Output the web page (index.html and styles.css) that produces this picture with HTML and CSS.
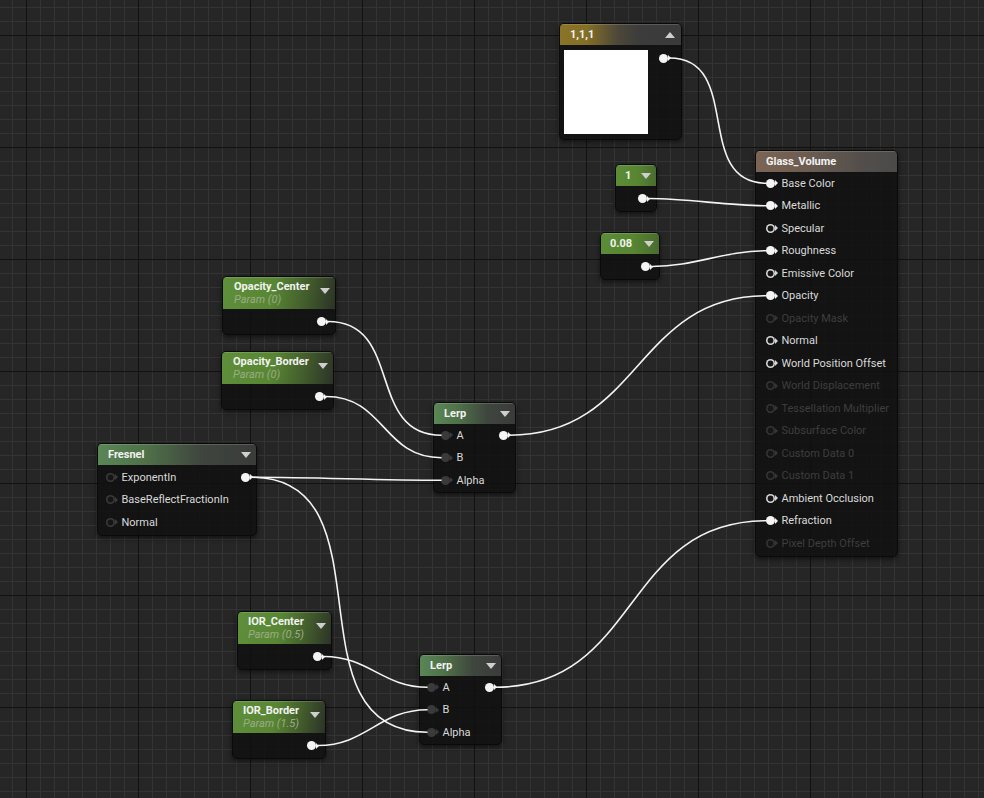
FILE: index.html
```html
<!DOCTYPE html>
<html lang="en">
  <head>
    <meta charset="UTF-8" />
    <meta name="viewport" content="width=device-width,initial-scale=1" />
    <title>Glass_Volume</title>
    <link rel="stylesheet" href="styles.css">
  </head>
  <body>
    <div class="graph" id="graph">
      <!-- constant 3 vector -->
      <div class="node n-vec3">
        <div class="head head-gold">
          <span class="title">1,1,1</span>
          <span class="caret caret-up"></span>
        </div>
        <div class="body body-vec3">
          <div class="swatch"></div>
          <span class="pin pin-on" id="vec3-out"></span>
        </div>
      </div>

      <div class="node n-one">
        <div class="head head-const">
          <span class="title">1</span>
          <span class="caret"></span>
        </div>
        <div class="body body-out">
          <span class="pin pin-on" id="one-out"></span>
        </div>
      </div>

      <div class="node n-rough">
        <div class="head head-const">
          <span class="title">0.08</span>
          <span class="caret"></span>
        </div>
        <div class="body body-out">
          <span class="pin pin-on" id="rough-out"></span>
        </div>
      </div>

      <!-- material result -->
      <div class="node n-glass">
        <div class="head head-result">
          <span class="title">Glass_Volume</span>
        </div>
        <div class="body body-glass">
          <div class="row"><span class="pin pin-on" id="in-base"></span><span class="label">Base Color</span></div>
          <div class="row"><span class="pin pin-on" id="in-metal"></span><span class="label">Metallic</span></div>
          <div class="row"><span class="pin pin-ring"></span><span class="label">Specular</span></div>
          <div class="row"><span class="pin pin-on" id="in-rough"></span><span class="label">Roughness</span></div>
          <div class="row"><span class="pin pin-ring"></span><span class="label">Emissive Color</span></div>
          <div class="row"><span class="pin pin-on" id="in-opacity"></span><span class="label">Opacity</span></div>
          <div class="row off"><span class="pin pin-ring"></span><span class="label">Opacity Mask</span></div>
          <div class="row"><span class="pin pin-ring"></span><span class="label">Normal</span></div>
          <div class="row"><span class="pin pin-ring"></span><span class="label">World Position Offset</span></div>
          <div class="row off"><span class="pin pin-ring"></span><span class="label">World Displacement</span></div>
          <div class="row off"><span class="pin pin-ring"></span><span class="label">Tessellation Multiplier</span></div>
          <div class="row off"><span class="pin pin-ring"></span><span class="label">Subsurface Color</span></div>
          <div class="row off"><span class="pin pin-ring"></span><span class="label">Custom Data 0</span></div>
          <div class="row off"><span class="pin pin-ring"></span><span class="label">Custom Data 1</span></div>
          <div class="row"><span class="pin pin-ring"></span><span class="label">Ambient Occlusion</span></div>
          <div class="row"><span class="pin pin-on" id="in-refr"></span><span class="label">Refraction</span></div>
          <div class="row off"><span class="pin pin-ring"></span><span class="label">Pixel Depth Offset</span></div>
        </div>
      </div>

      <!-- opacity params -->
      <div class="node n-opc">
        <div class="head head-param">
          <div class="names">
            <span class="title">Opacity_Center</span>
            <span class="sub">Param (0)</span>
          </div>
          <span class="caret"></span>
        </div>
        <div class="body body-out">
          <span class="pin pin-on" id="opc-out"></span>
        </div>
      </div>

      <div class="node n-opb">
        <div class="head head-param">
          <div class="names">
            <span class="title">Opacity_Border</span>
            <span class="sub">Param (0)</span>
          </div>
          <span class="caret"></span>
        </div>
        <div class="body body-out">
          <span class="pin pin-on" id="opb-out"></span>
        </div>
      </div>

      <div class="node n-lerp1">
        <div class="head head-func">
          <span class="title">Lerp</span>
          <span class="caret"></span>
        </div>
        <div class="body body-pins">
          <div class="row"><span class="pin pin-dim" id="l1-a"></span><span class="label">A</span><span class="pin pin-on out" id="l1-out"></span></div>
          <div class="row"><span class="pin pin-dim" id="l1-b"></span><span class="label">B</span></div>
          <div class="row"><span class="pin pin-dim" id="l1-alpha"></span><span class="label">Alpha</span></div>
        </div>
      </div>

      <div class="node n-fresnel">
        <div class="head head-func">
          <span class="title">Fresnel</span>
          <span class="caret"></span>
        </div>
        <div class="body body-pins">
          <div class="row"><span class="pin pin-ring dark"></span><span class="label">ExponentIn</span><span class="pin pin-on out" id="fresnel-out"></span></div>
          <div class="row"><span class="pin pin-ring dark"></span><span class="label">BaseReflectFractionIn</span></div>
          <div class="row"><span class="pin pin-ring dark"></span><span class="label">Normal</span></div>
        </div>
      </div>

      <!-- refraction params -->
      <div class="node n-iorc">
        <div class="head head-param">
          <div class="names">
            <span class="title">IOR_Center</span>
            <span class="sub">Param (0.5)</span>
          </div>
          <span class="caret"></span>
        </div>
        <div class="body body-out">
          <span class="pin pin-on" id="iorc-out"></span>
        </div>
      </div>

      <div class="node n-iorb">
        <div class="head head-param">
          <div class="names">
            <span class="title">IOR_Border</span>
            <span class="sub">Param (1.5)</span>
          </div>
          <span class="caret"></span>
        </div>
        <div class="body body-out">
          <span class="pin pin-on" id="iorb-out"></span>
        </div>
      </div>

      <div class="node n-lerp2">
        <div class="head head-func">
          <span class="title">Lerp</span>
          <span class="caret"></span>
        </div>
        <div class="body body-pins">
          <div class="row"><span class="pin pin-dim" id="l2-a"></span><span class="label">A</span><span class="pin pin-on out" id="l2-out"></span></div>
          <div class="row"><span class="pin pin-dim" id="l2-b"></span><span class="label">B</span></div>
          <div class="row"><span class="pin pin-dim" id="l2-alpha"></span><span class="label">Alpha</span></div>
        </div>
      </div>

      <svg class="wires" id="wires" width="984" height="798"></svg>
    </div>

    <script>
      const graph = document.getElementById("graph");
      const wires = document.getElementById("wires");

      const links = [
        ["vec3-out", "in-base"],
        ["one-out", "in-metal"],
        ["rough-out", "in-rough"],
        ["l1-out", "in-opacity"],
        ["l2-out", "in-refr"],
        ["opc-out", "l1-a"],
        ["opb-out", "l1-b"],
        ["fresnel-out", "l1-alpha"],
        ["fresnel-out", "l2-alpha"],
        ["iorc-out", "l2-a"],
        ["iorb-out", "l2-b"],
      ];

      const origin = graph.getBoundingClientRect();

      links.forEach(([from, to]) => {
        const a = document.getElementById(from).getBoundingClientRect();
        const b = document.getElementById(to).getBoundingClientRect();
        const x1 = a.left + 11 - origin.left;
        const y1 = a.top + a.height / 2 - origin.top;
        const x2 = b.left + 1 - origin.left;
        const y2 = b.top + b.height / 2 - origin.top;
        // same tangent rule as the engine: horizontal + vertical delta
        const t = (Math.abs(x2 - x1) + Math.abs(y2 - y1)) / 3;
        const path = document.createElementNS("http://www.w3.org/2000/svg", "path");
        path.setAttribute(
          "d",
          `M${x1},${y1} C${x1 + t},${y1} ${x2 - t},${y2} ${x2},${y2}`
        );
        wires.appendChild(path);
      });
    </script>
  </body>
</html>
```

FILE: styles.css
```css
body {
  margin: 0;
  padding: 0;
  background-color: #262626;
  font-family: Roboto, "Liberation Sans", Arial, sans-serif;
  overflow: hidden;
}

.graph {
  position: relative;
  width: 984px;
  height: 798px;
  overflow: hidden;
  background-color: #262626;
  background-image:
    linear-gradient(to right, #121212 1px, transparent 1px),
    linear-gradient(to bottom, #121212 1px, transparent 1px),
    linear-gradient(to right, #343434 1px, transparent 1px),
    linear-gradient(to bottom, #343434 1px, transparent 1px);
  background-size: 112px 100%, 100% 112px, 14px 100%, 100% 14px;
  background-position: 26px 0, 0 35px, 12px 0, 0 7px;
}

.wires {
  position: absolute;
  left: 0;
  top: 0;
  pointer-events: none;
  z-index: 2;
}

.wires path {
  fill: none;
  stroke: #f4f4f4;
  stroke-width: 1.6;
}

/* nodes */

.node {
  position: absolute;
  box-sizing: border-box;
  border: 1px solid #0a0a0a;
  border-radius: 5px;
  overflow: hidden;
  background-color: rgba(15, 16, 15, 0.86);
  box-shadow: 0 2px 5px rgba(0, 0, 0, 0.55);
  z-index: 1;
}

.n-vec3 { left: 559px; top: 23px; width: 123px; }
.n-one { left: 615px; top: 164px; width: 42px; }
.n-rough { left: 600px; top: 232px; width: 60px; }
.n-glass { left: 755px; top: 150px; width: 143px; }
.n-opc { left: 222px; top: 276px; width: 114px; }
.n-opb { left: 221px; top: 351px; width: 113px; }
.n-lerp1 { left: 433px; top: 402px; width: 83px; }
.n-fresnel { left: 97px; top: 443px; width: 160px; }
.n-iorc { left: 237px; top: 611px; width: 95px; }
.n-iorb { left: 232px; top: 700px; width: 94px; }
.n-lerp2 { left: 419px; top: 654px; width: 83px; }

.head {
  display: flex;
  align-items: center;
  justify-content: space-between;
  height: 21px;
  padding: 0 5px 0 10px;
  box-sizing: border-box;
  box-shadow: inset 0 1px 0 rgba(255, 255, 255, 0.16);
}

.title {
  color: #f2f2f2;
  font-size: 11px;
  font-weight: 700;
  line-height: 13px;
  white-space: nowrap;
}

.head-gold {
  background: linear-gradient(to right, #8a7427 0%, #836f27 22%, #4c4739 48%, #3c3c3c 65%, #3a3a3a 100%);
}

.head-const {
  padding-left: 9px;
  background: linear-gradient(to right, #5c8c36 0%, #578532 55%, #4a6c2f 100%);
}

.head-result {
  background: linear-gradient(to right, #7b6554 0%, #6c5d51 35%, #534e4b 75%, #4a4a4a 100%);
}

.head-func {
  background: linear-gradient(to right, #5a8656 0%, #4f7149 30%, #3f463e 65%, #3a3b3a 100%);
}

.head-param {
  height: 32px;
  align-items: flex-start;
  padding: 3px 5px 0 11px;
  background: linear-gradient(100deg, #5f8f3a 0%, #588634 45%, #415a2c 75%, #2c3327 100%);
}

.n-iorc .head-param,
.n-iorb .head-param {
  padding-left: 10px;
}

.names {
  display: flex;
  flex-direction: column;
}

.sub {
  color: #9cab86;
  font-size: 11px;
  font-style: italic;
  line-height: 14px;
  white-space: nowrap;
}

.caret {
  flex: none;
  width: 0;
  height: 0;
  border-left: 5px solid transparent;
  border-right: 5px solid transparent;
  border-top: 6px solid #cfcfcf;
}

.head-param .caret {
  margin-top: 8px;
}

.caret-up {
  border-top: none;
  border-bottom: 6px solid #cfcfcf;
  margin-right: 1px;
}

/* bodies */

.body-vec3 {
  display: flex;
  justify-content: space-between;
  align-items: flex-start;
  padding: 5px 4px 5px 4px;
}

.swatch {
  width: 84px;
  height: 84px;
  background-color: #ffffff;
}

.body-vec3 .pin {
  margin-top: 3.5px;
  margin-right: 9.5px;
}

.body-out {
  display: flex;
  justify-content: flex-end;
  align-items: center;
  height: 25px;
  padding-right: 6px;
}

.body-glass {
  padding: 0 0 1px 9.5px;
}

.body-pins {
  padding: 0 4.5px 0 6.5px;
}

.n-fresnel .body-pins {
  padding: 1px 3.5px 1px 7.5px;
}

.row {
  display: flex;
  align-items: center;
  height: 22.5px;
}

.label {
  margin-left: 4px;
  color: #dadada;
  font-size: 11px;
  white-space: nowrap;
}

.row.off .label {
  color: #3e3e3e;
}

.row.off .pin {
  color: #353535;
}

/* pins */

.pin {
  position: relative;
  flex: none;
  width: 9px;
  height: 9px;
  margin-right: 3px;
  border-radius: 50%;
  color: #f4f4f4;
}

.pin::after {
  content: "";
  position: absolute;
  left: 9px;
  top: 1.5px;
  border-left: 3px solid currentColor;
  border-top: 3px solid transparent;
  border-bottom: 3px solid transparent;
}

.pin-on {
  background-color: currentColor;
}

.pin-ring {
  color: #d6d6d6;
  background-color: #161616;
  box-shadow: inset 0 0 0 1.6px currentColor;
}

.pin-ring.dark {
  color: #3a3a3a;
}

.pin-dim {
  color: #3a3a3a;
  background-color: currentColor;
}

.pin.out {
  margin-left: auto;
}
```
